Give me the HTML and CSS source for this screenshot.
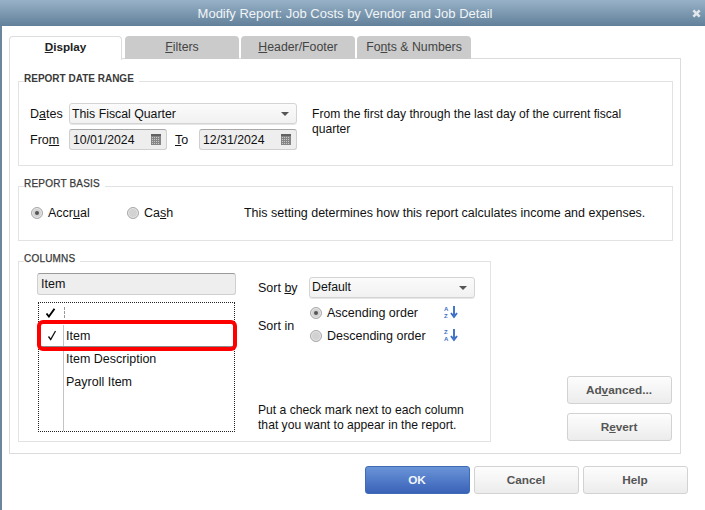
FILE: index.html
```html
<!DOCTYPE html>
<html lang="en">
<head>
<meta charset="utf-8">
<title>Modify Report</title>
<link rel="stylesheet" href="styles.css">
</head>
<body>
<div class="window">
  <header class="titlebar">
    <span class="title">Modify Report: Job Costs by Vendor and Job Detail</span>
    <svg class="close" width="9" height="9" viewBox="0 0 10 10"><path d="M1.5 1.5l7 7M8.5 1.5l-7 7" stroke="#e4e8ec" stroke-width="2.8"/></svg>
  </header>
  <div class="body">
    <nav class="tabs">
      <div class="tab active"><span><u>D</u>isplay</span></div>
      <div class="tab"><span><u>F</u>ilters</span></div>
      <div class="tab"><span><u>H</u>eader/Footer</span></div>
      <div class="tab"><span>Fo<u>n</u>ts &amp; Numbers</span></div>
    </nav>
    <section class="panel">
      <div class="group range">
        <div class="legend">REPORT DATE RANGE</div>
        <div class="range-row">
          <div class="range-fields">
            <div class="field-row">
              <span class="field-label">D<u>a</u>tes</span>
              <div class="combo wide"><span>This Fiscal Quarter</span><i class="caret"></i></div>
            </div>
            <div class="field-row">
              <span class="field-label">Fro<u>m</u></span>
              <div class="date"><span>10/01/2024</span><svg class="cal" width="10" height="11" viewBox="0 0 10 11"><rect width="10" height="11" fill="#858585"/><path d="M0 .5h10M0 1.5h10" stroke="#626262"/><path d="M1 3.5h8M1 5.5h8M1 7.5h8M1 9.5h8" stroke="#c9c9c9" stroke-dasharray="1 1"/></svg></div>
              <span class="to-label"><u>T</u>o</span>
              <div class="date"><span>12/31/2024</span><svg class="cal" width="10" height="11" viewBox="0 0 10 11"><rect width="10" height="11" fill="#858585"/><path d="M0 .5h10M0 1.5h10" stroke="#626262"/><path d="M1 3.5h8M1 5.5h8M1 7.5h8M1 9.5h8" stroke="#c9c9c9" stroke-dasharray="1 1"/></svg></div>
            </div>
          </div>
          <p class="range-desc">From the first day through the last day of the current fiscal quarter</p>
        </div>
      </div>

      <div class="group basis">
        <div class="legend spaced">REPORT BASIS</div>
        <div class="basis-row">
          <label class="radio-item accrual"><i class="radio on"></i><span>Accr<u>u</u>al</span></label>
          <label class="radio-item cash"><i class="radio"></i><span>Ca<u>s</u>h</span></label>
          <span class="basis-desc">This setting determines how this report calculates income and expenses.</span>
        </div>
      </div>

      <div class="bottom">
        <div class="group columns">
          <div class="legend spaced">COLUMNS</div>
          <div class="columns-row">
            <div class="picker">
              <div class="search">Item</div>
              <div class="list">
                <div class="list-row first"><span class="check"><svg width="11" height="10" viewBox="0 0 11 10"><path d="M1.5 5.5l2.4 3L9.5 .8" fill="none" stroke="#000" stroke-width="1.9"/></svg></span><span class="dash"></span></div>
                <div class="list-row current"><span class="check"><svg width="10" height="11" viewBox="0 0 10 11"><path d="M1.5 6.5l2.2 3L8.5 1" fill="none" stroke="#111" stroke-width="1.3"/></svg></span><span class="name">Item</span></div>
                <div class="list-row"><span class="check"></span><span class="name">Item Description</span></div>
                <div class="list-row"><span class="check"></span><span class="name">Payroll Item</span></div>
                <div class="list-fill"><span class="check"></span><span class="name"></span></div>
                <div class="highlight"></div>
              </div>
            </div>
            <div class="sort">
              <div class="sort-by">
                <span class="sort-label">Sort <u>b</u>y</span>
                <div class="combo narrow"><span>Default</span><i class="caret"></i></div>
              </div>
              <div class="sort-in">
                <span class="sort-label">Sort in</span>
                <div class="orders">
                  <label class="order"><i class="radio on"></i><span class="order-text">Ascending order</span>
                    <svg class="az" width="14" height="14" viewBox="0 0 14 14"><text x="0" y="6" class="az-text">A</text><text x="0" y="13" class="az-text">Z</text><path d="M10 1v9M7 8l3 4 3-4" fill="none" stroke="#3c6fc4" stroke-width="1.9"/></svg>
                  </label>
                  <label class="order"><i class="radio"></i><span class="order-text">Descending order</span>
                    <svg class="az" width="14" height="14" viewBox="0 0 14 14"><text x="0" y="6" class="az-text">Z</text><text x="0" y="13" class="az-text">A</text><path d="M10 1v9M7 8l3 4 3-4" fill="none" stroke="#3c6fc4" stroke-width="1.9"/></svg>
                  </label>
                </div>
              </div>
              <p class="hint">Put a check mark next to each column<br>that you want to appear in the report.</p>
            </div>
          </div>
        </div>
        <div class="side-buttons">
          <button class="btn">Ad<u>v</u>anced...</button>
          <button class="btn">R<u>e</u>vert</button>
        </div>
      </div>
    </section>
    <footer class="actions">
      <button class="btn primary">OK</button>
      <button class="btn">Cancel</button>
      <button class="btn">Help</button>
    </footer>
  </div>
</div>
</body>
</html>
```

FILE: styles.css
```css
* { box-sizing: border-box; }
html, body { margin: 0; padding: 0; }
body {
  width: 705px;
  height: 510px;
  overflow: hidden;
  font-family: "Liberation Sans", Arial, sans-serif;
  font-size: 12px;
  color: #111;
  background: #fff;
}
p { margin: 0; }
u { text-underline-offset: 1px; }

.window { height: 510px; border-left: 2px solid #6b859c; display: flex; flex-direction: column; }
.titlebar {
  height: 26px;
  flex: none;
  margin-left: -2px;
  padding-right: 15px;
  display: flex;
  align-items: center;
  justify-content: center;
  position: relative;
  background: linear-gradient(#97b2c8, #62809a);
  color: #f1f4f6;
  font-size: 13px;
}
.close { position: absolute; right: 4px; top: 9px; }

.body { flex: 1; padding: 10px 0 0 7px; }

.tabs { display: flex; gap: 2px; height: 23px; align-items: flex-end; position: relative; z-index: 1; }
.tab {
  width: 114px;
  height: 23px;
  padding-bottom: 2px;
  background: #cbcbcb;
  border-radius: 4px 4px 0 0;
  display: flex;
  align-items: center;
  justify-content: center;
  color: #444;
  font-size: 12.3px;
}
.tab.active {
  width: 113px;
  margin-right: 1px;
  height: 24px;
  margin-bottom: -1px;
  padding-bottom: 5px;
  background: #fff;
  border: 1px solid #ddd;
  border-bottom: 0;
  color: #222;
  font-weight: 700;
  font-size: 11.7px;
}

.panel {
  width: 672px;
  height: 396px;
  margin-top: -1px;
  border: 1px solid #dcdcdc;
  padding: 22px 7px 0 8px;
  display: flex;
  flex-direction: column;
}

.group { border: 1px solid #e2e2e2; }
.legend {
  width: fit-content;
  margin: -10px 0 0 5px;
  padding-right: 5px;
  height: 13px;
  line-height: 13px;
  background: #fff;
  font-size: 10px;
  font-weight: 700;
  color: #3a3a3a;
}
.legend.spaced { font-weight: 400; letter-spacing: .2px; -webkit-text-stroke: .25px #3a3a3a; }

.range { height: 85px; }
.range-row { display: flex; padding: 18px 0 0 11px; }
.range-fields { width: 268px; display: flex; flex-direction: column; gap: 5px; }
.field-row { display: flex; align-items: center; height: 21px; }
.field-label { width: 39px; font-size: 12.5px; }
.to-label { width: 32px; padding-left: 8px; font-size: 12.5px; }
.range-desc { width: 335px; margin: 4px 0 0 14px; line-height: 15px; font-size: 12.1px; }

.combo {
  height: 21px;
  display: flex;
  align-items: center;
  justify-content: space-between;
  padding: 0 7px 0 2px;
  border: 1px solid #d4d4d4;
  border-radius: 3px;
  background: linear-gradient(#fbfbfb, #f1f1f1);
  box-shadow: 0 1px 0 #e6e6e6;
  font-size: 12.3px;
}
.combo.wide { width: 228px; }
.combo.narrow { width: 166px; }
.caret { width: 0; height: 0; border: 4px solid transparent; border-top: 4px solid #555; border-bottom: 0; }

.date {
  width: 98px;
  height: 21px;
  display: flex;
  align-items: center;
  justify-content: space-between;
  padding: 0 5px 0 3px;
  background: #eee;
  border: 1px solid #cfcfcf;
  border-top-color: #a8a8a8;
  border-radius: 3px;
  font-size: 12.3px;
}

.basis { height: 55px; margin-top: 20px; }
.basis-row { display: flex; align-items: center; height: 42px; margin-top: 2px; padding-left: 12px; }
.basis-desc { font-size: 12.47px; }
.radio-item { display: flex; align-items: center; gap: 5px; font-size: 12.5px; }
.accrual { width: 96px; }
.cash { width: 117px; }

.radio {
  flex: none;
  width: 12px;
  height: 12px;
  border-radius: 50%;
  background: #d2d2d2;
  border: 1px solid #a9a9a9;
  box-shadow: inset 0 0 0 1px #e9e9e9;
  display: flex;
  align-items: center;
  justify-content: center;
}
.radio.on::after { content: ""; width: 4px; height: 4px; border-radius: 50%; background: #555; }

.bottom { display: flex; align-items: flex-end; justify-content: space-between; margin-top: 20px; padding-right: 1px; }
.columns { width: 473px; height: 181px; }
.columns-row { display: flex; padding: 8px 0 0 18px; }
.picker { width: 199px; }
.search {
  height: 22px;
  padding-left: 3px;
  line-height: 20px;
  background: #eee;
  border: 1px solid #cfcfcf;
  border-top-color: #9a9a9a;
  border-radius: 3px;
  font-size: 12.5px;
}
.list {
  position: relative;
  width: 197px;
  height: 130px;
  margin: 7px 0 0 1px;
  border: 1px dotted #222;
  display: flex;
  flex-direction: column;
}
.list-row { display: flex; height: 23px; align-items: center; flex: none; }
.list-row.first { height: 19px; }
.list-row.current { height: 25px; padding-top: 1px; border-top: 2px solid #8c8c8c; border-bottom: 1px solid #8c8c8c; margin: 0 1px; }
.check { width: 25px; flex: none; align-self: stretch; display: flex; align-items: center; justify-content: center; border-right: 1px solid #c4c4c4; }
.current .check { width: 24px; }
.first .check { border-right: 0; padding-right: 2px; }
.dash { height: 11px; border-left: 1px dashed #999; }
.name { padding-left: 2px; font-size: 12.5px; }
.list-fill { flex: 1; display: flex; }
.highlight {
  position: absolute;
  left: -2px;
  top: 17px;
  width: 200px;
  height: 31px;
  border: 4px solid #f00;
  border-radius: 6px;
}

.sort { width: 217px; margin-left: 22px; padding-top: 4px; }
.sort-label { font-size: 12.5px; }
.sort-by { display: flex; align-items: center; }
.sort-by .sort-label { width: 51px; }
.sort-by .combo span { margin-top: -1px; }
.sort-in { display: flex; align-items: center; margin-top: 3px; }
.sort-in .sort-label { width: 52px; margin-top: 4px; }
.orders { display: flex; flex-direction: column; }
.order { display: flex; align-items: center; height: 23px; gap: 5px; }
.order-text { width: 112px; font-size: 12.5px; }
.az { margin-top: -2px; }
.az-text { font-family: "Liberation Sans", sans-serif; font-size: 6px; font-weight: 700; fill: #3c6fc4; }
.hint { margin-top: 56px; line-height: 15px; font-size: 12.15px; }

.side-buttons { display: flex; flex-direction: column; gap: 9px; margin-bottom: 1px; }
.btn {
  width: 105px;
  height: 28px;
  padding: 0 1px 0 0;
  border: 1px solid #d2d2d2;
  border-radius: 3px;
  background: linear-gradient(#fdfdfd, #ececec);
  font-family: "Liberation Sans", Arial, sans-serif;
  font-size: 11.8px;
  font-weight: 700;
  color: #555;
}
.actions { display: flex; gap: 4px; margin: 12px 0 0 356px; }
.btn.primary { background: linear-gradient(#6a94d8, #3a62b8); border-color: #3f6bb5; color: #f2f5fb; }
```
